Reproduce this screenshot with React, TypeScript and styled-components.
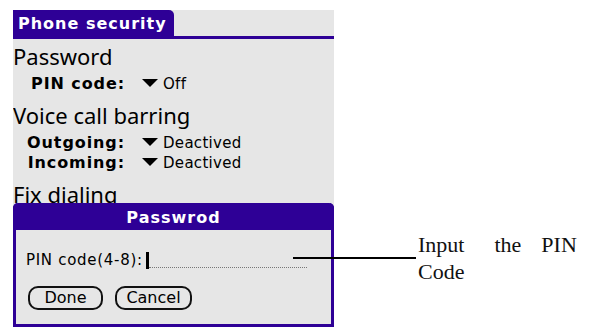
import styled, { createGlobalStyle } from "styled-components";

const PURPLE = "#2e0096";
const GRAY = "#e6e6e6";

const GlobalStyle = createGlobalStyle`
  *, *::before, *::after {
    margin: 0;
    padding: 0;
    box-sizing: border-box;
  }

  html, body {
    width: 590px;
    height: 328px;
    overflow: hidden;
    background: #fff;
    font-family: "DejaVu Sans", sans-serif;
    color: #000;
  }
`;

const Page = styled.div`
  display: flex;
  align-items: flex-start;
  width: 590px;
  height: 328px;
`;

const Screen = styled.div`
  position: relative;
  margin: 10px 0 0 13px;
  width: 321px;
  height: 317px;
  background: ${GRAY};
  overflow: hidden;
`;

const Header = styled.div`
  display: flex;
  border-bottom: 3px solid ${PURPLE};
`;

const Tab = styled.div`
  width: 161px;
  height: 26px;
  padding: 2px 0 0 5px;
  background: ${PURPLE};
  border-top-right-radius: 5px;
  color: #fff;
  font-family: "DejaVu Sans", sans-serif;
  font-weight: bold;
  font-size: 16px;
  line-height: 24px;
  letter-spacing: 1px;
  white-space: nowrap;
`;

const Content = styled.div`
  padding-top: 5px;
`;

const Section = styled.section`
  & + & {
    margin-top: 9px;
  }
`;

const Heading = styled.div`
  height: 24px;
  font-family: "Noto Sans", sans-serif;
  font-size: 22px;
  line-height: 24px;
  white-space: nowrap;
`;

const FieldList = styled.div`
  margin-top: 6px;
`;

const FieldRow = styled.div`
  display: flex;
  align-items: center;
  height: 20px;
`;

const Label = styled.div`
  width: 112px;
  text-align: right;
  font-weight: bold;
  font-size: 16px;
  line-height: 20px;
  letter-spacing: 0.9px;
  white-space: nowrap;
`;

const Arrow = styled.svg`
  margin: 0 0 2px 17px;
  flex: none;
`;

const Value = styled.div`
  margin-left: 5px;
  font-size: 15px;
  line-height: 20px;
  letter-spacing: 0.3px;
  white-space: nowrap;
`;

const Dialog = styled.div`
  position: absolute;
  left: 0;
  right: 0;
  top: 193px;
  bottom: 0;
  background: ${GRAY};
  border: 3px solid ${PURPLE};
  border-top: none;
  border-radius: 5px 5px 0 0;
`;

const DialogTitle = styled.div`
  height: 27px;
  margin: 0 -3px;
  padding-top: 2px;
  background: ${PURPLE};
  border-radius: 5px 5px 0 0;
  color: #fff;
  text-align: center;
  font-weight: bold;
  font-size: 16px;
  line-height: 25px;
  letter-spacing: 1px;
`;

const DialogBody = styled.div`
  padding: 20px 0 0 10px;
`;

const InputRow = styled.div`
  display: flex;
  align-items: flex-start;
  height: 20px;
`;

const InputLabel = styled.div`
  font-size: 15px;
  line-height: 20px;
  letter-spacing: 0.7px;
  white-space: nowrap;
`;

const Caret = styled.div`
  width: 3px;
  height: 17px;
  margin: 2px 0 0 3px;
  background: #000;
`;

const Dotted = styled.div`
  width: 158px;
  height: 18px;
  border-bottom: 1px dotted #777;
`;

const Buttons = styled.div`
  display: flex;
  gap: 12px;
  margin: 16px 0 0 2px;
`;

const Button = styled.button<{ $width: number }>`
  width: ${(p) => p.$width}px;
  height: 24px;
  border: 2px solid #111;
  border-radius: 10px;
  background: transparent;
  color: #000;
  font-family: "DejaVu Sans", sans-serif;
  font-size: 16px;
  line-height: 20px;
`;

const Callout = styled.div`
  position: relative;
  margin: 231px 0 0 84px;
  font-family: "Liberation Serif", serif;
  font-size: 22px;
  line-height: 27px;
  color: #111;

  &::before {
    content: "";
    position: absolute;
    left: -125px;
    top: 26px;
    width: 123px;
    height: 2px;
    background: #000;
  }
`;

const CalloutLine = styled.div`
  display: flex;
  white-space: nowrap;
`;

const Word = styled.span<{ $gap?: number }>`
  margin-left: ${(p) => p.$gap ?? 0}px;
`;

function DropArrow() {
  return (
    <Arrow width="16" height="8" viewBox="0 0 16 8">
      <polygon points="0,0 16,0 8,8" fill="#000" />
    </Arrow>
  );
}

const fields = [
  {
    title: "Password",
    rows: [{ label: "PIN code:", value: "Off" }],
  },
  {
    title: "Voice call barring",
    rows: [
      { label: "Outgoing:", value: "Deactived" },
      { label: "Incoming:", value: "Deactived" },
    ],
  },
  { title: "Fix dialing", rows: [] },
];

export default function App() {
  return (
    <>
      <GlobalStyle />
      <Page>
        <Screen>
          <Header>
            <Tab>Phone security</Tab>
          </Header>
          <Content>
            {fields.map((s) => (
              <Section key={s.title}>
                <Heading>{s.title}</Heading>
                {s.rows.length > 0 && (
                  <FieldList>
                    {s.rows.map((r) => (
                      <FieldRow key={r.label}>
                        <Label>{r.label}</Label>
                        <DropArrow />
                        <Value>{r.value}</Value>
                      </FieldRow>
                    ))}
                  </FieldList>
                )}
              </Section>
            ))}
          </Content>
          <Dialog>
            <DialogTitle>Passwrod</DialogTitle>
            <DialogBody>
              <InputRow>
                <InputLabel>PIN code(4-8):</InputLabel>
                <Caret />
                <Dotted />
              </InputRow>
              <Buttons>
                <Button $width={75}>Done</Button>
                <Button $width={77}>Cancel</Button>
              </Buttons>
            </DialogBody>
          </Dialog>
        </Screen>
        <Callout>
          <CalloutLine>
            <Word>Input</Word>
            <Word $gap={30}>the</Word>
            <Word $gap={20}>PIN</Word>
          </CalloutLine>
          <CalloutLine>
            <Word>Code</Word>
          </CalloutLine>
        </Callout>
      </Page>
    </>
  );
}
